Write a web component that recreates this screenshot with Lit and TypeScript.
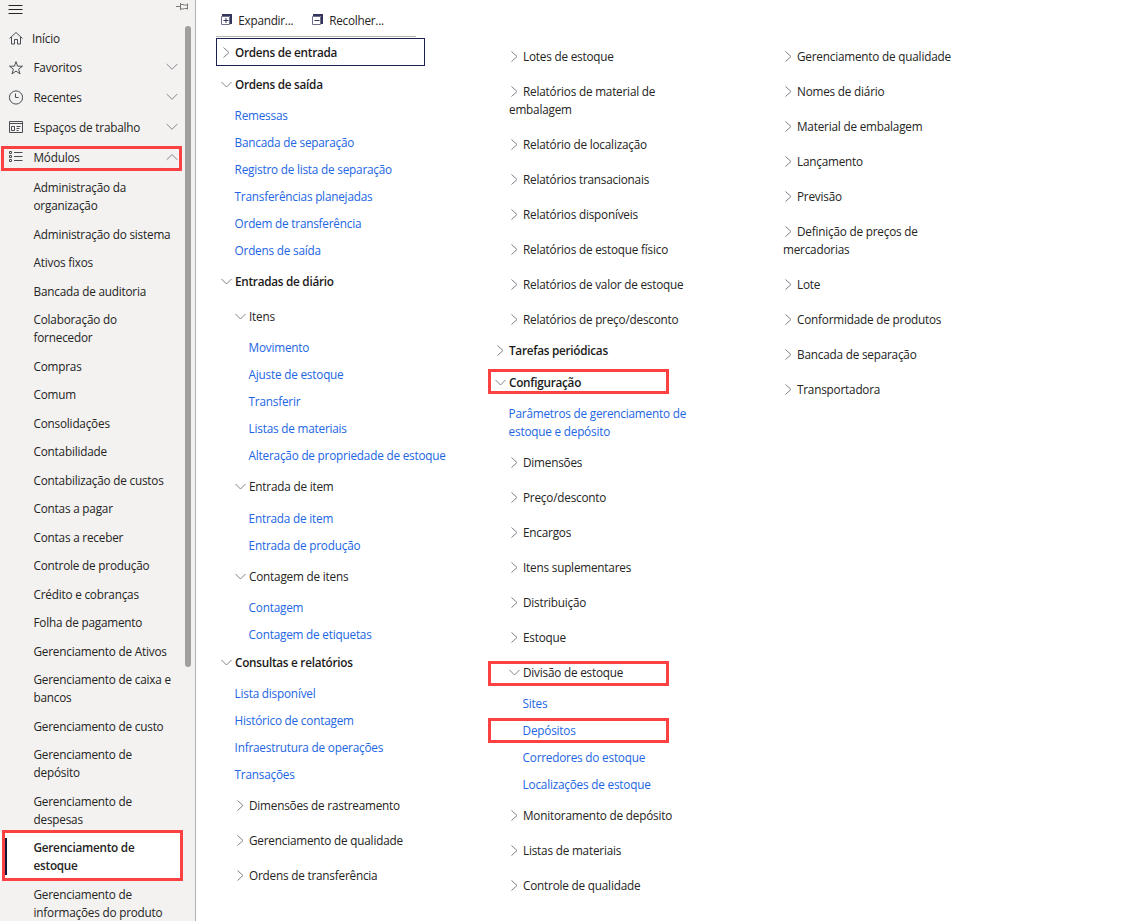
import { LitElement, html, css, svg, nothing } from "lit";
import { customElement, property } from "lit/decorators.js";

type Kind = "section" | "node" | "link";
interface Row {
  kind: Kind;
  lines: string[];
  open?: boolean;
  level?: number;
  mark?: boolean;
  focus?: boolean;
  gap?: string;
}

const section = (text: string, o: Partial<Row> = {}): Row => ({ kind: "section", lines: [text], ...o });
const node = (text: string, o: Partial<Row> = {}): Row => ({ kind: "node", lines: text.split("|"), ...o });
const link = (text: string, level = 1, o: Partial<Row> = {}): Row => ({ kind: "link", lines: text.split("|"), level, ...o });

const COLUMNS: Row[][] = [
  [
    section("Ordens de entrada", { focus: true }),
    section("Ordens de saída", { open: true }),
    link("Remessas", 1, { gap: "first" }),
    link("Bancada de separação"),
    link("Registro de lista de separação"),
    link("Transferências planejadas"),
    link("Ordem de transferência"),
    link("Ordens de saída"),
    section("Entradas de diário", { open: true, gap: "first" }),
    node("Itens", { open: true, gap: "first" }),
    link("Movimento", 2),
    link("Ajuste de estoque", 2),
    link("Transferir", 2),
    link("Listas de materiais", 2),
    link("Alteração de propriedade de estoque", 2),
    node("Entrada de item", { open: true }),
    link("Entrada de item", 2, { gap: "thin" }),
    link("Entrada de produção", 2),
    node("Contagem de itens", { open: true }),
    link("Contagem", 2),
    link("Contagem de etiquetas", 2),
    section("Consultas e relatórios", { open: true, gap: "tight" }),
    link("Lista disponível", 1, { gap: "first" }),
    link("Histórico de contagem"),
    link("Infraestrutura de operações"),
    link("Transações"),
    node("Dimensões de rastreamento"),
    node("Gerenciamento de qualidade"),
    node("Ordens de transferência"),
  ],
  [
    node("Lotes de estoque"),
    node("Relatórios de material de|embalagem"),
    node("Relatório de localização"),
    node("Relatórios transacionais"),
    node("Relatórios disponíveis"),
    node("Relatórios de estoque físico"),
    node("Relatórios de valor de estoque"),
    node("Relatórios de preço/desconto"),
    section("Tarefas periódicas", { gap: "tighter" }),
    section("Configuração", { open: true, mark: true }),
    link("Parâmetros de gerenciamento de|estoque e depósito", 1, { gap: "first" }),
    node("Dimensões"),
    node("Preço/desconto"),
    node("Encargos"),
    node("Itens suplementares"),
    node("Distribuição"),
    node("Estoque"),
    node("Divisão de estoque", { open: true, mark: true }),
    link("Sites", 2),
    link("Depósitos", 2, { mark: true }),
    link("Corredores do estoque", 2),
    link("Localizações de estoque", 2),
    node("Monitoramento de depósito"),
    node("Listas de materiais"),
    node("Controle de qualidade"),
  ],
  [
    node("Gerenciamento de qualidade"),
    node("Nomes de diário"),
    node("Material de embalagem"),
    node("Lançamento"),
    node("Previsão"),
    node("Definição de preços de|mercadorias"),
    node("Lote"),
    node("Conformidade de produtos"),
    node("Bancada de separação"),
    node("Transportadora"),
  ],
];

const MODULES = [
  "Administração da|organização", "Administração do sistema", "Ativos fixos", "Bancada de auditoria",
  "Colaboração do|fornecedor", "Compras", "Comum", "Consolidações", "Contabilidade",
  "Contabilização de custos", "Contas a pagar", "Contas a receber", "Controle de produção",
  "Crédito e cobranças", "Folha de pagamento", "Gerenciamento de Ativos",
  "Gerenciamento de caixa e|bancos", "Gerenciamento de custo", "Gerenciamento de|depósito",
  "Gerenciamento de|despesas", "Gerenciamento de|estoque", "Gerenciamento de|informações do produto",
];
const ACTIVE = "Gerenciamento de|estoque";

const ICONS: Record<string, unknown> = {
  home: svg`<path d="M1.500 7.500 8 1.500 14.500 7.500M3.500 6V13H6.500V8.500H9.500V13H12.500V6"/>`,
  star: svg`<path d="M8 1.600 9.600 6.200H14.500L10.600 9.200 12 13.900 8 11.100 4 13.900 5.400 9.200 1.500 6.200H6.400Z"/>`,
  clock: svg`<circle cx="8" cy="7.500" r="6.600"/><path d="M7.500 3.500V7.500H10.500"/>`,
  board: svg`<path d="M1.500 1.500H14.500V12.500H1.500ZM1.500 3.500H14.500M3.500 6.500H6.500V10.500H3.500ZM8.500 6.500H12.500M8.500 8.500H11.500M8.500 10.500H10.500"/>`,
  modules: svg`<path d="M1.500 1.500H3.500V3.500H1.500ZM1.500 5.500H3.500V7.500H1.500ZM1.500 9.500H3.500V11.500H1.500ZM6 2.500H14.500M6 6.500H14.500M6 10.500H14.500"/>`,
};

const breakLines = (lines: string[]) => lines.map((l, i) => (i ? html`<br />${l}` : l));

@customElement("nav-sidebar")
export class NavSidebar extends LitElement {
  static styles = css`
    :host { display: block; position: relative; box-sizing: border-box; width: 196px; height: 921px; overflow: hidden;
      background: #f3f2f1; border-right: 1px solid #b3b1af; flex: none; }
    .top { display: flex; justify-content: space-between; height: 24px; padding: 0 6px 0 8px; box-sizing: border-box; }
    .top svg { display: block; }
    .row { position: relative; display: flex; align-items: center; height: 30px; padding: 0 17px 0 8px; }
    .row.home { height: 29px; }
    .row .label { margin-left: 9.500px; flex: 1; padding-bottom: 2px; }
    .row.home .label { margin-left: 8px; }
    .icon { fill: none; stroke: #4a4e54; stroke-width: 1; flex: none; }
    .chev { fill: none; stroke: #84868a; stroke-width: 1; margin-top: -2px; }
    .module { line-height: 18px; padding: 5.250px 0 5.250px 33.500px; position: relative; }
    .active { background: #fff; font-weight: 600; letter-spacing: -0.25px; margin-right: 14px; }
    .active::before { content: ""; position: absolute; left: 5px; top: 5px; width: 2px; height: 37px; background: #14143c; }
    .mark { position: absolute; border: 3px solid #fb4141; box-sizing: border-box; left: 1px; width: 181px; top: 3px; height: 25px; }
    .active .mark { left: 2px; top: -3px; width: 181px; height: 51px; }
    .thumb { position: absolute; right: 4px; top: 26px; width: 6px; height: 641px; border-radius: 3px; background: #a19f9d; }
  `;

  private row(icon: string, label: string, dir = "", mark = false) {
    return html`<div class="row ${icon}">
      <svg class="icon" width="16" height="16" viewBox="0 0 16 16">${ICONS[icon]}</svg>
      <span class="label">${label}</span>
      ${dir
        ? html`<svg class="chev" width="12" height="8" viewBox="0 0 12 8">
            <path d=${dir === "down" ? "M0.700 1 6 6.300 11.300 1" : "M0.700 6.800 6 1.500 11.300 6.800"} />
          </svg>`
        : nothing}
      ${mark ? html`<span class="mark"></span>` : nothing}
    </div>`;
  }

  render() {
    return html`
      <div class="top">
        <svg width="16" height="16" viewBox="0 0 16 16" stroke="#262626" fill="none"><path d="M0.500 5.500H14.500M0.500 9.500H14.500M0.500 13.500H14.500" /></svg>
        <svg width="13" height="13" viewBox="0 0 13 13" stroke="#77797b" fill="none"><path d="M0 6.500H4.500M4.500 3V10M4.500 4.500H7L8.500 5H11.500V8.500H8.500L7 9H4.500M11.500 3.500V9.500" /></svg>
      </div>
      ${this.row("home", "Início")}
      ${this.row("star", "Favoritos", "down")}
      ${this.row("clock", "Recentes", "down")}
      ${this.row("board", "Espaços de trabalho", "down")}
      ${this.row("modules", "Módulos", "up", true)}
      <div>${MODULES.map(
        (m) => html`<div class="module ${m === ACTIVE ? "active" : ""}">
          ${breakLines(m.split("|"))}${m === ACTIVE ? html`<span class="mark"></span>` : nothing}
        </div>`
      )}</div>
      <div class="thumb"></div>
    `;
  }
}

@customElement("menu-column")
export class MenuColumn extends LitElement {
  @property({ attribute: false }) rows: Row[] = [];

  static styles = css`
    :host { display: block; width: 274px; flex: none; }
    .row { position: relative; line-height: 18px; white-space: nowrap; }
    .section { font-weight: 600; letter-spacing: -0.27px; padding: 7px 0 7px 5px; color: #1b1a19; }
    .node { padding: 8.500px 0 8.500px 19px; }
    .link { padding: 4.500px 0 4.500px 18.600px; color: #2266e3; }
    .deep { padding-left: 32.600px; }
    .first { margin-top: 1.500px; }
    .thin { margin-top: 1px; }
    .tight { margin-top: -2px; }
    .tighter { margin-top: -2.500px; }
    .chev { display: inline-block; width: 14px; height: 12px; vertical-align: -2px; fill: none; stroke: #80808a; stroke-width: 1; }
    .focus { position: absolute; left: 0; top: 2px; width: 209px; height: 28px; box-sizing: border-box; border: 1px solid #1d1f4f; }
    .mark { position: absolute; left: -2px; top: calc(50% - 12px); width: 181px; height: 25px; box-sizing: border-box; border: 3px solid #fb4141; }
    .section .mark { top: calc(50% - 13px); }
    .node .mark { top: calc(50% - 11px); }
  `;

  render() {
    return this.rows.map(
      (r) => html`<div class="row ${r.kind} ${r.level === 2 ? "deep" : ""} ${r.gap ?? ""}">${r.kind === "link"
          ? nothing
          : html`<svg class="chev" viewBox="0 0 14 12"><path d=${r.open ? "M0.500 3 5.500 8 10.500 3" : "M2.500 0.500 8 5.500 2.500 10.500"} /></svg>`}${breakLines(r.lines)}${r.focus
          ? html`<span class="focus"></span>`
          : nothing}${r.mark ? html`<span class="mark"></span>` : nothing}</div>`
    );
  }
}

@customElement("app-root")
export class AppRoot extends LitElement {
  static styles = css`
    :host { display: flex; width: 1129px; height: 921px; overflow: hidden; background: #fff; color: #252423;
      font: 11.750px/18px "Open Sans", "Noto Sans", sans-serif; letter-spacing: -0.2px; }
    .main { flex: 1; min-width: 0; padding-left: 20px; }
    .tools { display: flex; align-items: center; width: 200px; height: 37px; box-sizing: border-box; padding: 5px 0 0 5px; border-bottom: 1px solid #b5b5b5; }
    .tool { display: flex; align-items: center; margin-right: 18.500px; white-space: nowrap; letter-spacing: -0.25px; }
    .tool svg { margin: -2px 5.300px 0 0; }
    .tool span { padding-bottom: 2px; }
    .columns { display: flex; align-items: flex-start; margin-top: -1px; }
    .late { padding-top: 2px; }
  `;

  private tool(label: string, plus: boolean) {
    return html`<div class="tool">
      <svg width="12" height="12" viewBox="0 0 12 12" fill="none" stroke="#34355c">
        <path d="M0.500 2.500H8.500V10.500H0.500Z" stroke="#6d6e88" />
        <path d="M1 1H10V10" stroke-width="2" />
        <path d=${plus ? "M2.500 6.500H7.500M5 4V9" : "M2.500 6.500H7.500"} />
      </svg><span>${label}</span>
    </div>`;
  }

  render() {
    return html`
      <nav-sidebar></nav-sidebar>
      <div class="main">
        <div class="tools">${this.tool("Expandir...", true)}${this.tool("Recolher...", false)}</div>
        <div class="columns">
          ${COLUMNS.map((rows, i) => html`<menu-column class=${i ? "late" : ""} .rows=${rows}></menu-column>`)}
        </div>
      </div>
    `;
  }
}
